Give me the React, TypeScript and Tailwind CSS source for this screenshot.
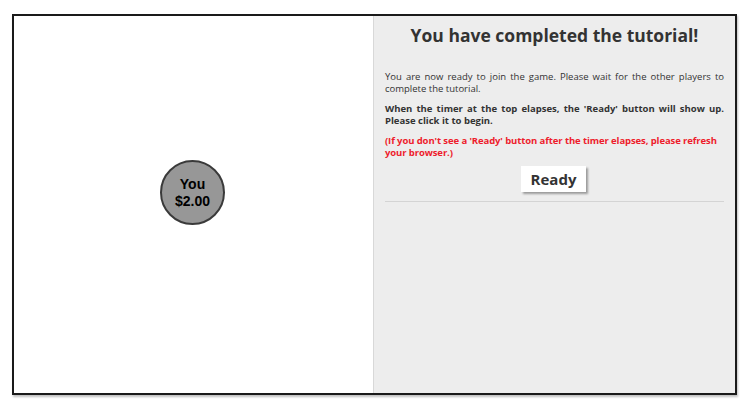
export default function App() {
  return (
    <div className="w-[749px] h-[410px] bg-white pt-[14px] pl-[12px]">
      <div className="w-[725px] h-[381px] border-2 border-[#1a1a1a] shadow-[1px_2px_2px_rgba(0,0,0,0.25)] flex">
        {/* game canvas */}
        <div className="w-[359px] h-full bg-white flex items-center justify-center">
          <div className="w-[65px] h-[65px] rounded-full bg-[#979797] border-2 border-[#3a3a3a] flex flex-col items-center justify-center mb-[24px] mr-[2px] font-['Liberation_Sans',Arial,sans-serif] font-bold text-[14px] leading-[17px] text-black">
            <span>You</span>
            <span>$2.00</span>
          </div>
        </div>

        {/* instructions */}
        <div className="flex-1 h-full bg-[#ededed] border-l border-[#d8d8d8] px-[11px] pt-[6px] font-['Open_Sans',sans-serif] text-[#333]">
          <h1 className="text-center text-[17.5px] font-bold leading-[26px] text-[#333]">
            You have completed the tutorial!
          </h1>
          <p className="mt-[23px] text-[9.5px] leading-[12px] text-justify">
            You are now ready to join the game. Please wait for the other players to complete the tutorial.
          </p>
          <p className="mt-[8px] text-[9.5px] leading-[12px] text-justify font-bold">
            When the timer at the top elapses, the 'Ready' button will show up. Please click it to begin.
          </p>
          <p className="mt-[8px] text-[9.5px] leading-[12px] font-bold text-[#ee1c2c] tracking-[-0.1px]">
            (If you don't see a 'Ready' button after the timer elapses, please refresh your browser.)
          </p>
          <div className="flex justify-center mt-[7px]">
            <button className="w-[65px] h-[26px] bg-white text-[15px] font-bold text-[#333] shadow-[2px_2px_2px_rgba(0,0,0,0.35)] mr-[2px]">
              Ready
            </button>
          </div>
          <div className="mt-[9px] border-t border-[#d4d4d4]" />
        </div>
      </div>
    </div>
  );
}
